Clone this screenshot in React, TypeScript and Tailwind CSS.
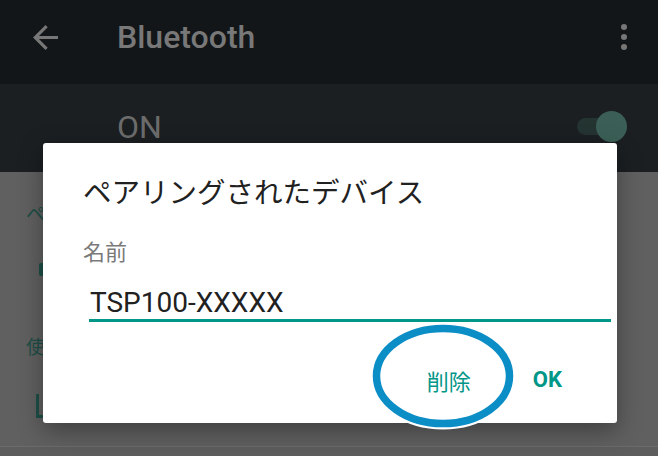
import React from 'react';

const jp = { fontFamily: '"Noto Sans CJK JP", "Noto Sans", sans-serif' };
const roboto = { fontFamily: 'Roboto, "Noto Sans CJK JP", sans-serif' };

const App: React.FC = () => {
  return (
    <div className="relative h-[456px] w-[658px] overflow-hidden bg-[#606060]" style={roboto}>
      {/* app bar */}
      <div className="flex h-[84px] items-center bg-[#121619] pb-[10px] pl-[33px] pr-[31px]">
        <svg width="25" height="25" viewBox="4 4 16 16" className="shrink-0">
          <path d="M20 11H7.83l5.59-5.59L12 4l-8 8 8 8 1.41-1.41L7.83 13H20v-2z" fill="#777777" />
        </svg>
        <span className="ml-[59px] text-[32px] font-medium leading-[32px] text-[#787878]">Bluetooth</span>
        <div className="ml-auto flex flex-col gap-[4px]">
          <span className="h-[6px] w-[6px] rounded-full bg-[#777777]" />
          <span className="h-[6px] w-[6px] rounded-full bg-[#777777]" />
          <span className="h-[6px] w-[6px] rounded-full bg-[#777777]" />
        </div>
      </div>

      {/* on row */}
      <div className="flex h-[88px] items-center bg-[#1b1f22] pb-[3px] pl-[117px] pr-[31px]">
        <span className="text-[32px] leading-[32px] text-[#6c6c6c]">ON</span>
        <div className="relative ml-auto h-[31px] w-[50px]">
          <div className="absolute left-0 top-[7px] h-[17px] w-[34px] rounded-full bg-[#243431]" />
          <div className="absolute right-0 top-0 h-[31px] w-[31px] rounded-full bg-[#3b5f56]" />
        </div>
      </div>

      {/* list behind scrim, only its left edge shows past the dialog */}
      <div className="flex h-[275px] flex-col border-b border-[#6b6b6b] pl-[26px] text-[#1d4f47]" style={jp}>
        <div className="mt-[29px] text-[19px] leading-[24px]">ペ</div>
        <div className="ml-[13px] mt-[38px] h-[13px] w-[24px] shrink-0 rounded-[2px] bg-[#1d4f47]" />
        <div className="mt-[58px] text-[19px] leading-[24px]">使</div>
        <svg width="20" height="24" viewBox="0 0 20 24" className="ml-[10px] mt-[36px] shrink-0">
          <path d="M0 0h3v21h17v3H0z" fill="#1d4f47" />
        </svg>
      </div>
      <div className="h-[9px] w-full bg-[#5d5d5d]" />

      {/* dialog */}
      <div className="absolute left-[43px] top-[143px] flex h-[280px] w-[574px] flex-col rounded-[3px] bg-white pl-[40px] pr-[6px] pt-[34px] shadow-[0_8px_24px_rgba(0,0,0,0.35)]">
        <div className="text-[28.5px] leading-[28px] text-[#212121]" style={jp}>ペアリングされたデバイス</div>
        <div className="mt-[34px] text-[22px] leading-[22px] text-[#7a7a7a]" style={jp}>名前</div>
        <div className="ml-[6px] mt-[28px] flex flex-col">
          <span className="pl-[1px] text-[28px] leading-[28px] text-[#212121]" style={roboto}>TSP100-XXXXX</span>
          <div className="mt-[2px] h-[2.5px] w-[522px] bg-[#009688]" />
        </div>
        <div className="mt-[47px] flex items-center justify-end gap-[62px] pr-[49px] text-[#009688]">
          <span className="text-[22px] leading-[22px]" style={jp}>削除</span>
          <span className="text-[22px] font-bold leading-[22px]" style={roboto}>OK</span>
        </div>
      </div>

      {/* annotation ring */}
      <svg width="150" height="112" viewBox="0 0 150 112" className="absolute left-[368px] top-[320px]">
        <ellipse cx="75" cy="56" rx="66.5" ry="47.5" fill="none" stroke="#ffffff" strokeWidth="12" />
        <ellipse cx="75" cy="56" rx="66.5" ry="47.5" fill="none" stroke="#0b8dc6" strokeWidth="7.5" />
      </svg>
    </div>
  );
};

export default App;
